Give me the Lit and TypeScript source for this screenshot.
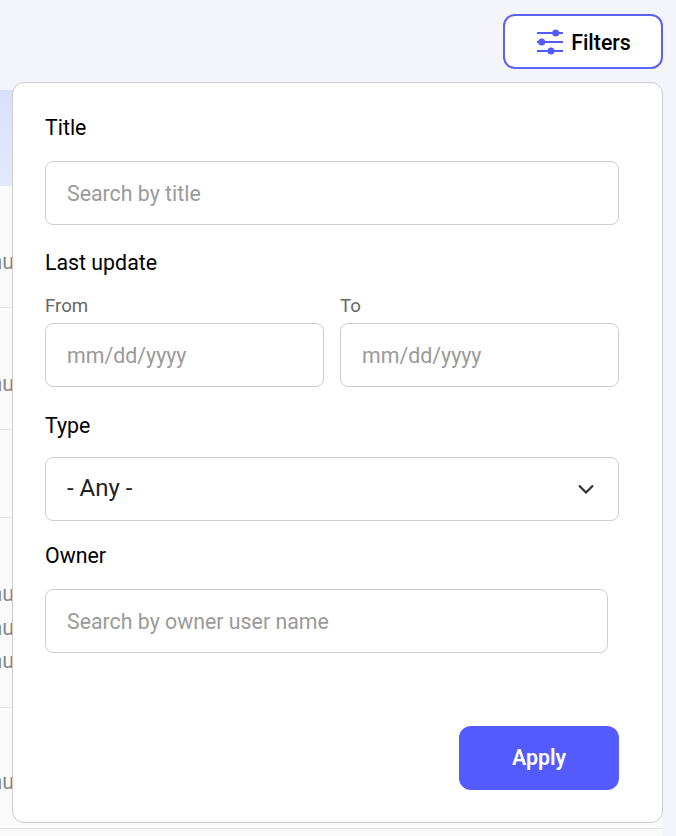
import { LitElement, html, css } from "lit";
import { customElement } from "lit/decorators.js";

@customElement("app-root")
export class AppRoot extends LitElement {
  static styles = css`
    :host { display: block; position: relative; width: 676px; height: 836px; overflow: hidden; background: #f4f5fa; font-family: Roboto, "Liberation Sans", sans-serif; color: #000; }
    * { box-sizing: border-box; }
    .top { height: 90px; display: flex; justify-content: flex-end; align-items: flex-start; padding: 14px 13px 0 0; }
    .filters { width: 160px; height: 55px; border: 2px solid #5b62f6; border-radius: 12px; background: #fff; display: flex; align-items: center; justify-content: center; gap: 8px; font: 500 21.33px Roboto, sans-serif; color: #000; padding: 1px 0 0; }
    .filters svg { display: block; }
    .table { width: 663px; height: 746px; background: #fafafa; display: flex; flex-direction: column; }
    .hl { height: 96px; background: linear-gradient(180deg, #d9e0fc, #e4e8fa); flex: none; }
    .row { flex: none; border-bottom: 1px solid #e2e2e2; display: flex; flex-direction: column; align-items: flex-start; position: relative; }
    .nu { width: 14px; height: 33.5px; overflow: hidden; display: flex; justify-content: flex-end; align-items: center; font-size: 21.33px; color: #888; white-space: nowrap; flex: none; }
    .r1 { height: 122px; padding-top: 59px; }
    .r2 { height: 122px; padding-top: 59px; }
    .r3 { height: 88px; }
    .r4 { height: 190px; padding-top: 59px; }
    .r5 { height: 121px; padding-top: 57px; }
    .panel { position: absolute; left: 12px; top: 82px; width: 651px; height: 741px; background: #fff; border: 1px solid #cdcdcd; border-radius: 12px; padding: 32px 43px 0 32px; display: flex; flex-direction: column; align-items: flex-start; }
    .label { font-size: 21.33px; line-height: 26px; height: 24px; color: #000; }
    .sub { font-size: 18.67px; line-height: 24px; height: 22px; color: #666; }
    .field { height: 64px; border: 1px solid #cdcdcd; border-radius: 8px; background: #fff; padding: 0 21px; font: 400 21.33px Roboto, sans-serif; color: #222; outline: none; display: block; }
    .field::placeholder { color: #9a9a9a; opacity: 1; }
    .w574 { width: 574px; }
    .w563 { width: 563px; }
    .dates { display: grid; grid-template-columns: 279px 279px; column-gap: 16px; width: 574px; }
    .dates .field { width: 279px; margin-top: 7px; }
    .select { width: 574px; height: 64px; border: 1px solid #cdcdcd; border-radius: 8px; padding: 0 23px 2px 21px; display: flex; align-items: center; justify-content: space-between; font-size: 24px; line-height: 28px; color: #222; }
    .select svg { position: relative; top: 1px; }
    .apply { align-self: flex-end; width: 160px; height: 64px; margin-top: 73px; border: none; border-radius: 12px; background: #535bfd; color: #fff; font: 600 21.33px Roboto, sans-serif; padding: 0 0 2px; }
    .mt22 { margin-top: 22px; }
    .mt25 { margin-top: 25px; }
    .mt20 { margin-top: 20px; }
    .mt26 { margin-top: 26px; }
  `;

  render() {
    const nu = html`<div class="nu">Manu</div>`;
    return html`
      <div class="top">
        <button class="filters">
          <svg width="28" height="28" viewBox="0 0 28 28" fill="none">
            <path d="M2 5h26M2 14h26M2 23h26" stroke="#535bfd" stroke-width="2" />
            <circle cx="20.700" cy="5" r="3.500" fill="#535bfd" />
            <circle cx="6.700" cy="14" r="3.500" fill="#535bfd" />
            <circle cx="16" cy="23" r="3.500" fill="#535bfd" />
          </svg>
          Filters
        </button>
      </div>
      <div class="table">
        <div class="hl"></div>
        <div class="row r1">${nu}</div>
        <div class="row r2">${nu}</div>
        <div class="row r3"></div>
        <div class="row r4">${nu}${nu}${nu}</div>
        <div class="row r5">${nu}</div>
      </div>
      <form class="panel" @submit=${(e: Event) => e.preventDefault()}>
        <div class="label">Title</div>
        <input class="field w574 mt22" placeholder="Search by title" />
        <div class="label mt25">Last update</div>
        <div class="dates mt20">
          <div><div class="sub">From</div><input class="field" placeholder="mm/dd/yyyy" /></div>
          <div><div class="sub">To</div><input class="field" placeholder="mm/dd/yyyy" /></div>
        </div>
        <div class="label mt26">Type</div>
        <div class="select mt20">
          <span>- Any -</span>
          <svg width="18" height="10" viewBox="0 0 18 10" fill="none"><path d="M2 1.500l7 7 7-7" stroke="#333" stroke-width="2.200" /></svg>
        </div>
        <div class="label mt22">Owner</div>
        <input class="field w563 mt22" placeholder="Search by owner user name" />
        <button class="apply" type="submit">Apply</button>
      </form>
    `;
  }
}
